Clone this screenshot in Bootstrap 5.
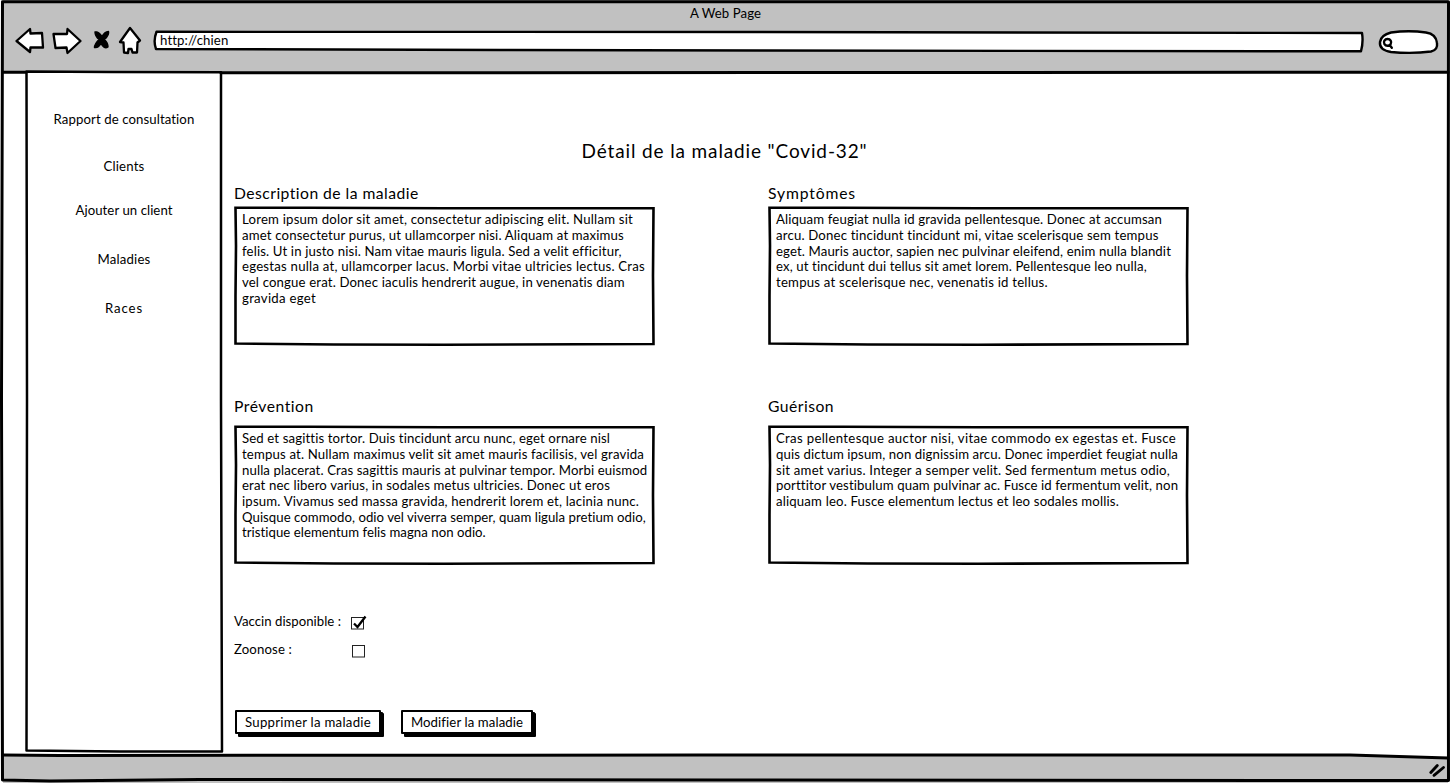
<!DOCTYPE html>
<html lang="fr">
<head>
<meta charset="utf-8">
<title>A Web Page</title>
<link href="https://cdn.jsdelivr.net/npm/bootstrap@5.3.0/dist/css/bootstrap.min.css" rel="stylesheet">
<style>
  body { width: 1451px; height: 783px; overflow: hidden; background: #fff; color: #000; font: 13.2px/20px Lato, "Liberation Sans", sans-serif; }
  svg { display: block; overflow: visible; }
  .ink { fill: none; stroke: #000; stroke-width: 3; stroke-linejoin: round; stroke-linecap: round; }
  .sheet { fill: #fff; }
  .win { width: 1451px; height: 783px; }
  .win-head { height: 72px; background: #c1c1c1; margin: 0 3px; }
  .win-title { height: 27px; line-height: 27px; }
  .tools { height: 32px; padding: 0 9px 0 12px; }
  .address { width: 1210px; height: 20px; margin-left: 9px; }
  .address-text { padding-left: 6px; line-height: 19px; }
  .side { width: 196px; margin-left: 26px; height: 680px; padding-top: 37px; }
  .side .nav-link { padding: 0; height: 20px; line-height: 20px; color: #000; text-align: center; }
  .content { width: 1005px; padding: 67px 12px 0; }
  .page-title { font-size: 19px; line-height: 24px; margin: 0 0 20px; font-weight: 400; }
  .grid-notes { display: grid; grid-template-columns: 421px 421px; column-gap: 113px; }
  .field-title { font-size: 15.7px; line-height: 20px; font-weight: 400; margin: 0; }
  .note { height: 140px; padding: 6.3px 8px; margin-top: 3px; line-height: 15.65px; }
  .second { margin-top: 50px; }
  .second .note { margin-top: 9px; }
  .fit { white-space: pre; display: inline-block; }
  .note .fit { display: block; width: max-content; }
  .checks { margin-top: 46px; }
  .check-label { width: 117px; }
  .btn-sketch { height: 24px; padding: 0; border: 2px solid #000; border-radius: 1px; background: #fff; font-size: 13.2px; line-height: 20px; color: #000; box-shadow: 1px 1px #000, 2px 2px #000, 3px 3px #000; clip-path: polygon(0 0, 100% 0, 100% 2px, calc(100% + 3px) 2px, calc(100% + 3px) calc(100% + 3px), 3px calc(100% + 3px), 3px 100%, 0 100%); }
  .actions { margin-top: 51px; padding-left: 1px; gap: 20px; }
  .foot { height: 27px; background: #c1c1c1; margin: 0 3px; }
</style>
</head>
<body>
<div class="win position-relative d-flex flex-column">
  <header class="win-head">
    <div class="win-title text-center"><span class="fit" data-w="71">A Web Page</span></div>
    <div class="tools d-flex">
      <svg width="130" height="28" viewBox="15 23 130 28" class="ink" style="stroke-width:2.3">
        <path class="sheet" d="M16.500 37 L30 25 L30.500 29.500 L42 29 L43 43.500 L30.500 43.500 L30 48 Z"/>
        <path class="sheet" d="M53.500 30 L67 30 L67.500 25 L80.500 37 L67.500 49 L66.500 43.500 L55.500 44 L54.500 37 Z"/>
        <path fill="#000" stroke-width="1.400" d="M95 28 Q98.500 27 102 32.500 Q104.500 28 108.500 27.500 Q109.500 31 104.500 35.500 Q108 39 108 43 Q104 45.500 101 39.500 Q98 44.500 94.500 43.500 Q94.500 40 99 35.500 Q95 32 95 28Z"/>
        <path class="sheet" d="M130 24 L140 36.500 L137.500 38.500 L137 48.500 L132.500 48.500 L131.500 45 L128.500 45 L128 49 L124 48.500 L123.500 38.500 L120 38 Z"/>
      </svg>
      <div class="address position-relative mt-1">
        <svg class="position-absolute top-0 start-0 ink" width="1210" height="20" viewBox="154 31 1210 20" style="stroke-width:2.400"><path class="sheet" d="M156.500 31.800 L760 32 L1362 33 Q1363.500 42 1361 51.300 L760 50.500 L500 50 L156 49 Q153 41 156.500 31.800Z"/></svg>
        <div class="position-relative address-text"><span class="fit" data-w="68">http://chien</span></div>
      </div>
      <svg class="ms-auto ink mt-1" width="60" height="26" viewBox="1379 30 60 26" style="stroke-width:2.400"><path class="sheet" d="M1380 41 Q1381 34 1391 31.500 Q1409 29 1426 31.500 Q1436 33 1437 42 Q1438 49 1431 50.500 Q1412 53 1391 51 Q1379 49 1380 41Z"/><path d="M1387.500 38 a3.600 3.400 0 1 0 .1 0Z M1390 44.500 l1.800 2.300"/></svg>
    </div>
  </header>

  <div class="d-flex flex-grow-1">
    <nav class="side position-relative">
      <svg class="position-absolute top-0 start-0 ink" width="196" height="680" viewBox="26 72 196 680" style="stroke-width:2.500"><path d="M26.500 71.500 L110 72 L221 72.300 L221 400 L222 751.500 L120 751.500 L26.500 750.500 L27 400 Z"/></svg>
      <ul class="nav flex-column position-relative">
        <li><a class="nav-link"><span class="fit" data-w="141">Rapport de consultation</span></a></li>
        <li class="mt-4 pt-1"><a class="nav-link" style="margin-top:-1px"><span class="fit" data-w="41">Clients</span></a></li>
        <li class="mt-4"><a class="nav-link"><span class="fit" data-w="97">Ajouter un client</span></a></li>
        <li class="mt-4 pt-1"><a class="nav-link" style="margin-top:1px"><span class="fit" data-w="53">Maladies</span></a></li>
        <li class="mt-4 pt-1"><a class="nav-link" style="margin-top:1px"><span class="fit" data-w="38">Races</span></a></li>
      </ul>
    </nav>

    <main class="content">
      <h1 class="page-title text-center"><span class="fit" data-w="286">Détail de la maladie "Covid-32"</span></h1>

      <div class="grid-notes">
        <section>
          <h2 class="field-title"><span class="fit" data-w="185">Description de la maladie</span></h2>
          <div class="note position-relative"><svg class="edge"></svg><span class="fit" data-w="391">Lorem ipsum dolor sit amet, consectetur adipiscing elit. Nullam sit</span><span class="fit" data-w="382">amet consectetur purus, ut ullamcorper nisi. Aliquam at maximus</span><span class="fit" data-w="379">felis. Ut in justo nisi. Nam vitae mauris ligula. Sed a velit efficitur,</span><span class="fit" data-w="403">egestas nulla at, ullamcorper lacus. Morbi vitae ultricies lectus. Cras</span><span class="fit" data-w="383">vel congue erat. Donec iaculis hendrerit augue, in venenatis diam</span><span class="fit" data-w="74">gravida eget</span></div>
        </section>
        <section>
          <h2 class="field-title"><span class="fit" data-w="88">Symptômes</span></h2>
          <div class="note position-relative"><svg class="edge"></svg><span class="fit" data-w="386">Aliquam feugiat nulla id gravida pellentesque. Donec at accumsan</span><span class="fit" data-w="383">arcu. Donec tincidunt tincidunt mi, vitae scelerisque sem tempus</span><span class="fit" data-w="395">eget. Mauris auctor, sapien nec pulvinar eleifend, enim nulla blandit</span><span class="fit" data-w="371">ex, ut tincidunt dui tellus sit amet lorem. Pellentesque leo nulla,</span><span class="fit" data-w="272">tempus at scelerisque nec, venenatis id tellus.</span></div>
        </section>
      </div>

      <div class="grid-notes second">
        <section>
          <h2 class="field-title"><span class="fit" data-w="80">Prévention</span></h2>
          <div class="note position-relative"><svg class="edge"></svg><span class="fit" data-w="368">Sed et sagittis tortor. Duis tincidunt arcu nunc, eget ornare nisl</span><span class="fit" data-w="402">tempus at. Nullam maximus velit sit amet mauris facilisis, vel gravida</span><span class="fit" data-w="405">nulla placerat. Cras sagittis mauris at pulvinar tempor. Morbi euismod</span><span class="fit" data-w="368">erat nec libero varius, in sodales metus ultricies. Donec ut eros</span><span class="fit" data-w="397">ipsum. Vivamus sed massa gravida, hendrerit lorem et, lacinia nunc.</span><span class="fit" data-w="404">Quisque commodo, odio vel viverra semper, quam ligula pretium odio,</span><span class="fit" data-w="244">tristique elementum felis magna non odio.</span></div>
        </section>
        <section>
          <h2 class="field-title"><span class="fit" data-w="66">Guérison</span></h2>
          <div class="note position-relative"><svg class="edge"></svg><span class="fit" data-w="400">Cras pellentesque auctor nisi, vitae commodo ex egestas et. Fusce</span><span class="fit" data-w="402">quis dictum ipsum, non dignissim arcu. Donec imperdiet feugiat nulla</span><span class="fit" data-w="394">sit amet varius. Integer a semper velit. Sed fermentum metus odio,</span><span class="fit" data-w="402">porttitor vestibulum quam pulvinar ac. Fusce id fermentum velit, non</span><span class="fit" data-w="343">aliquam leo. Fusce elementum lectus et leo sodales mollis.</span></div>
        </section>
      </div>

      <div class="checks d-flex">
        <div class="check-label"><span class="fit" data-w="107">Vaccin disponible :</span></div>
        <svg width="17" height="20" viewBox="351 611 17 20"><rect x="351.500" y="617.500" width="12" height="11.500" fill="#fff" stroke="#222"/><path d="M354 623.500 L357.500 627 L365.500 616.500" fill="none" stroke="#000" stroke-width="2.300"/></svg>
      </div>
      <div class="d-flex mt-2">
        <div class="check-label"><span class="fit" data-w="58">Zoonose :</span></div>
        <svg width="17" height="20" viewBox="351 639 17 20"><rect x="352.500" y="645.500" width="12" height="11.500" fill="#fff" stroke="#222"/></svg>
      </div>

      <div class="actions d-flex">
        <button class="btn btn-sketch" style="width:146px"><span class="fit" data-w="126">Supprimer la maladie</span></button>
        <button class="btn btn-sketch" style="width:132px"><span class="fit" data-w="112">Modifier la maladie</span></button>
      </div>
    </main>
  </div>

  <footer class="foot"></footer>

  <!-- window outline, hand-drawn style -->
  <svg class="position-absolute top-0 start-0 pe-none ink" width="1451" height="783" viewBox="0 0 1451 783">
    <path d="M3 755 L700 755 L1360 755 L1447 757.500 L1447 753 L3 753Z" fill="#fff" stroke="none"/>
    <path d="M2.500 1.800 L1448.500 1.800 L1448 400 L1448.500 780.500 L720 780 L200 779.500 L50 781 L2.500 780 L1.500 400 Z"/>
    <path d="M3 72.300 L26 72.300 M221 72.800 L1448 72.300"/>
    <path d="M3 755 L60 755.500 L700 755 L1350 755 L1448 758"/>
    <path d="M1430.800 772.500 L1437.300 765.500 M1434 775.300 L1443.500 767.500" stroke-width="2.900"/>
  </svg>
</div>
<script src="https://cdn.jsdelivr.net/npm/bootstrap@5.3.0/dist/js/bootstrap.bundle.min.js"></script>
<script>
  // rough outline around each text area
  document.querySelectorAll('.edge').forEach(function (s) {
    s.setAttribute('class', 'position-absolute top-0 start-0 ink');
    s.setAttribute('width', 421);
    s.setAttribute('height', 140);
    s.innerHTML = '<path stroke-width="2.6" stroke-linejoin="miter" d="M1.500 1.700 L75 1.700 L210 2.200 L419.500 2.300 L419 70 L419.500 138 L210 138.800 L100 138.500 L1.500 137.500 L1.500 90 L2 40 Z"/>';
  });
  // track each line of lettering to its set width
  document.querySelectorAll('.fit').forEach(function (e) {
    var n = e.textContent.length;
    e.style.letterSpacing = ((+e.dataset.w - e.getBoundingClientRect().width) / n).toFixed(4) + 'px';
  });
</script>
</body>
</html>
